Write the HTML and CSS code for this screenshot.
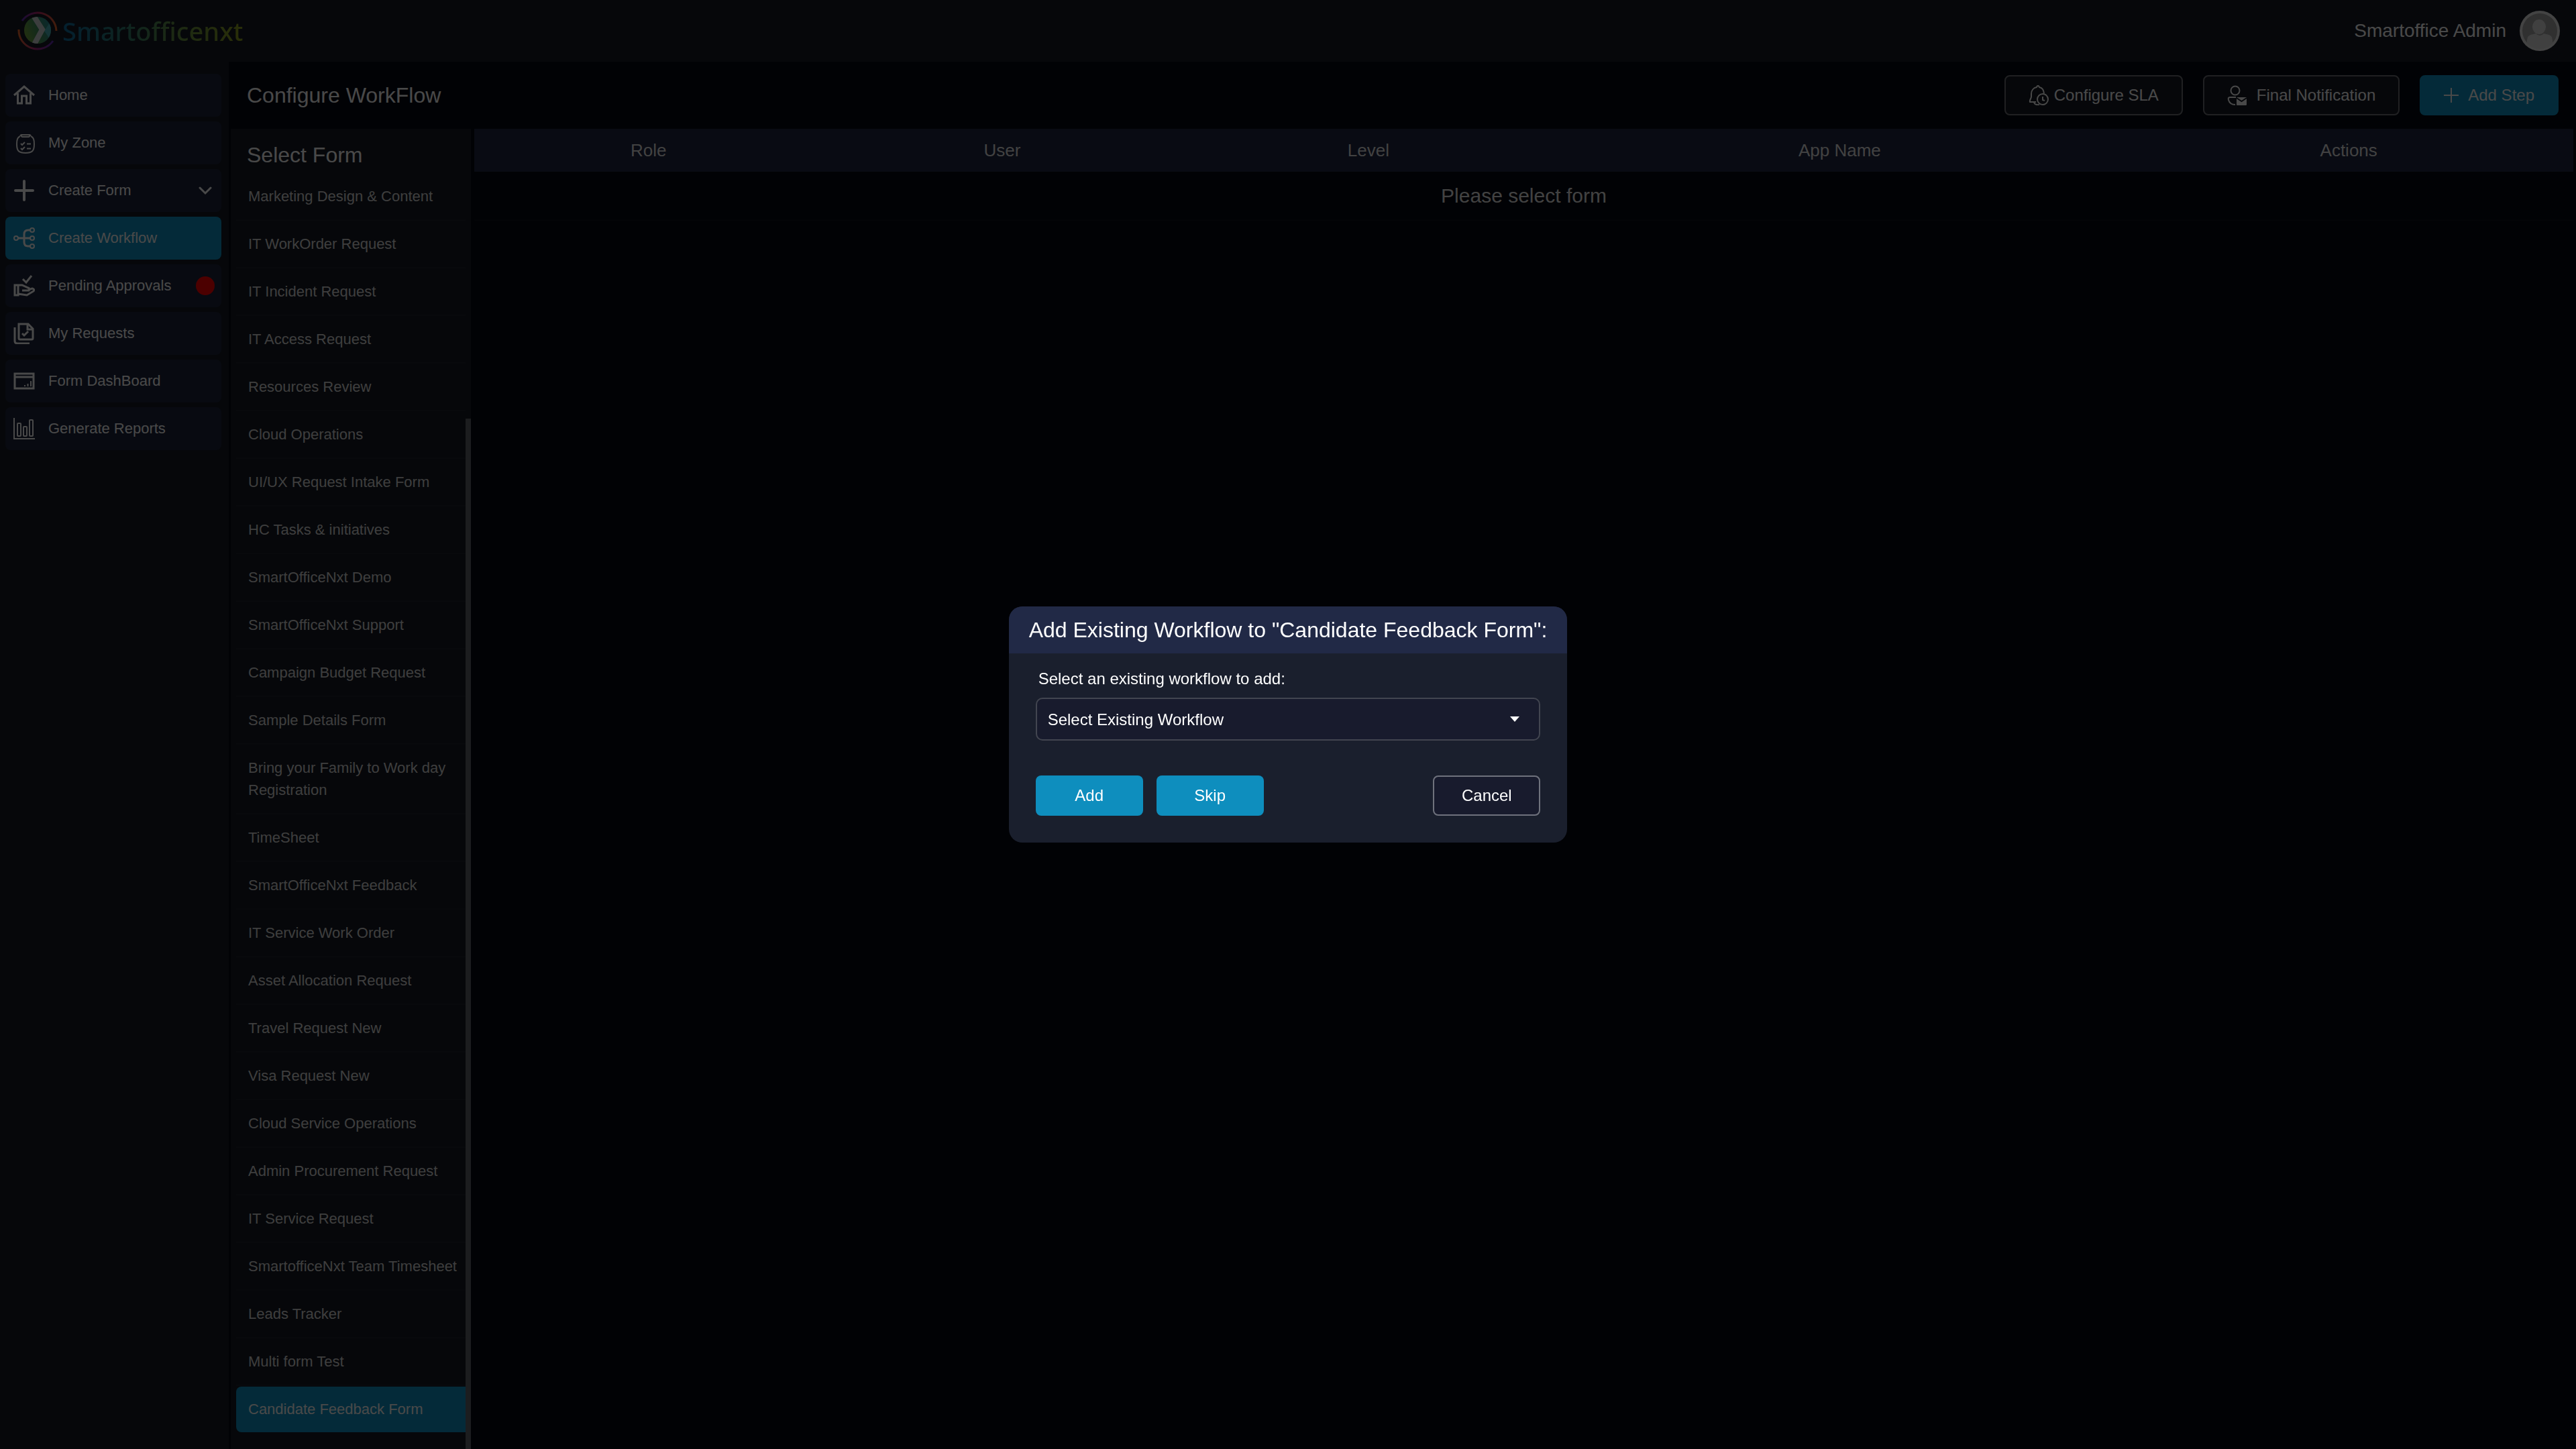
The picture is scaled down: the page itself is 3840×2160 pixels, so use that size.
FILE: index.html
```html
<!DOCTYPE html>
<html lang="en">
<head>
    <meta charset="UTF-8">
    <meta name="viewport" content="width=device-width, initial-scale=1.0">
    <title>Smartofficenxt - Configure WorkFlow</title>
    <link rel="stylesheet" href="styles.css">
</head>
<body>

    <header class="topbar">
        <a class="logo" href="#">
            <svg class="logo-mark" viewBox="0 0 60 60" fill="none">
                <defs>
                    <linearGradient id="ring-top" x1="0" y1="0" x2="1" y2="0">
                        <stop offset="0" stop-color="#5a2bb0"/>
                        <stop offset="0.45" stop-color="#b02468"/>
                        <stop offset="1" stop-color="#e0622a"/>
                    </linearGradient>
                    <linearGradient id="ring-bottom" x1="0" y1="0" x2="1" y2="0">
                        <stop offset="0" stop-color="#e0622a"/>
                        <stop offset="0.5" stop-color="#a3247c"/>
                        <stop offset="1" stop-color="#5a2bb0"/>
                    </linearGradient>
                    <linearGradient id="disc" x1="0" y1="0.6" x2="1" y2="0.2">
                        <stop offset="0" stop-color="#6fa03a"/>
                        <stop offset="0.5" stop-color="#3d8a5c"/>
                        <stop offset="1" stop-color="#26899a"/>
                    </linearGradient>
                    <clipPath id="disc-clip"><circle cx="30" cy="29" r="20"/></clipPath>
                </defs>
                <path d="M7 15A28 28 0 0 1 58 30" stroke="url(#ring-top)" stroke-width="3"/>
                <path d="M2 28A28 28 0 0 0 53 45" stroke="url(#ring-bottom)" stroke-width="3"/>
                <circle cx="30" cy="29" r="20" fill="url(#disc)"/>
                <g clip-path="url(#disc-clip)">
                    <path d="M40 30L52 12V48Z" fill="#46aeb5"/>
                    <path d="M23 6L37 28L24 52" stroke="#c8d0d0" stroke-width="8"/>
                </g>
            </svg>
            <span class="logo-text">Smartofficenxt</span>
        </a>
        <div class="user">
            <span class="user-name">Smartoffice Admin</span>
            <svg class="avatar" viewBox="0 0 60 60">
                <defs><clipPath id="avatar-clip"><circle cx="30" cy="30" r="27"/></clipPath></defs>
                <circle cx="30" cy="30" r="30" fill="#e0e0e0"/>
                <circle cx="30" cy="30" r="26" fill="#a0a0a0"/>
                <g clip-path="url(#avatar-clip)" fill="#d8d8d8">
                    <ellipse cx="29" cy="24" rx="10" ry="11"/>
                    <path d="M11 60V44q0-8 9-9l4-1q6 6 12 0l4 1q9 1 9 9v16z"/>
                </g>
            </svg>
        </div>
    </header>

    <div class="layout">
        <!-- Main menu -->
        <nav class="sidebar">
            <a class="menu-item" href="#">
                <svg class="icon" viewBox="0 0 32 32" fill="none" stroke="currentColor" stroke-width="3"><path d="M1 16L16 3l15 13M6.500 13v15h6V17h7v11h6V13"/></svg>
                Home
            </a>
            <a class="menu-item" href="#">
                <svg class="icon" viewBox="0 0 32 32" fill="none" stroke="currentColor" stroke-width="2"><path d="M10 6C6 8 5 11 5 18c0 10 3 13 13 13s13-3 13-13c0-7-1-10-5-12"/><path d="M10 4l3 3h10l3-3M11 4h14"/><path d="M11 17l2 2 4-4M11 24l2 2 4-4M20 17.500h6M20 24.500h6"/></svg>
                My Zone
            </a>
            <button class="menu-item" type="button">
                <svg class="icon" viewBox="0 0 32 32" fill="none" stroke="currentColor" stroke-width="4" stroke-linecap="round"><path d="M16 2v28M3 16h26"/></svg>
                Create Form
                <svg class="chevron" viewBox="0 0 20 20" fill="none" stroke="currentColor" stroke-width="3" stroke-linecap="round"><path d="M2 6l8 8 8-8"/></svg>
            </button>
            <a class="menu-item active" href="#">
                <svg class="icon" viewBox="0 0 32 32" fill="none" stroke="currentColor" stroke-width="2"><circle cx="4" cy="16" r="3"/><circle cx="28" cy="4" r="3"/><circle cx="28" cy="16" r="3"/><circle cx="28" cy="28" r="3"/><path d="M7 16h18M25 4h-3q-6 0-6 6v12q0 6 6 6h3" stroke-width="3"/></svg>
                Create Workflow
            </a>
            <a class="menu-item" href="#">
                <svg class="icon" viewBox="0 0 32 32" fill="none" stroke="currentColor" stroke-width="3"><path d="M14 6l5 5 8-10"/><path d="M2 15h5v15H2zM7 15h6l9 4q3 1 1 4H13M22 22l6-2q4 1 2 4l-10 6-13-2"/></svg>
                Pending Approvals
                <span class="badge"></span>
            </a>
            <a class="menu-item" href="#">
                <svg class="icon" viewBox="0 0 32 32" fill="none" stroke="currentColor" stroke-width="3"><path d="M8 2h14l7 7v14q0 2-2 2H10q-2 0-2-2z"/><path d="M21 2v8h8M2 7v20q0 4 4 4h18M13 16l3 3 6-6"/></svg>
                My Requests
            </a>
            <a class="menu-item" href="#">
                <svg class="icon" viewBox="0 0 32 32" fill="none" stroke="currentColor" stroke-width="3"><path d="M2 5h28v22H2zM2 10h28"/><path d="M17 24v-2M21.500 24v-4M26 24v-8" stroke-width="2"/></svg>
                Form DashBoard
            </a>
            <a class="menu-item" href="#">
                <svg class="icon" viewBox="0 0 32 32" fill="none" stroke="currentColor" stroke-width="2"><path d="M1 0v31h31"/><rect x="6" y="8" width="5" height="19" rx="1"/><rect x="15" y="13" width="5" height="14" rx="1"/><rect x="24" y="3" width="5" height="24" rx="1"/></svg>
                Generate Reports
            </a>
        </nav>

        <main class="content">
            <div class="page-head">
                <h1>Configure WorkFlow</h1>
                <div class="actions">
                    <button class="btn outline" type="button">
                        <svg class="btn-icon" viewBox="0 0 30 30" fill="none" stroke="currentColor" stroke-width="2"><path d="M11 25H2c-1-3 2-5 2-8v-4c0-5 3-9 8-10 1-3 3-3 4 0 5 1 6 4 7 9M8 26q2 4 8 3"/><circle cx="21" cy="21" r="8"/><path d="M21 17v5l3 1"/></svg>
                        Configure SLA
                    </button>
                    <button class="btn outline wide" type="button">
                        <svg class="btn-icon" viewBox="0 0 30 30" fill="none" stroke="currentColor" stroke-width="2"><circle cx="12" cy="8" r="6.500"/><path d="M13 18H4q-3 0-2 4 2 7 10 7"/><rect x="14" y="18" width="15" height="12" rx="1" fill="currentColor" stroke="none"/><path d="M14 19l7.500 5 7.500-5" stroke="#161a24"/></svg>
                        Final Notification
                    </button>
                    <button class="btn primary wide" type="button">
                        <svg class="plus-icon" viewBox="0 0 22 22" fill="none" stroke="currentColor" stroke-width="2"><path d="M11 0v22M0 11h22"/></svg>
                        Add Step
                    </button>
                </div>
            </div>

            <div class="workspace">
                <section class="forms">
                    <h2>Select Form</h2>
                    <div class="form-scroll">
                        <ul class="form-list">
                            <li><a href="#">Marketing Design &amp; Content</a></li>
                            <li><a href="#">IT WorkOrder Request</a></li>
                            <li><a href="#">IT Incident Request</a></li>
                            <li><a href="#">IT Access Request</a></li>
                            <li><a href="#">Resources Review</a></li>
                            <li><a href="#">Cloud Operations</a></li>
                            <li><a href="#">UI/UX Request Intake Form</a></li>
                            <li><a href="#">HC Tasks &amp; initiatives</a></li>
                            <li><a href="#">SmartOfficeNxt Demo</a></li>
                            <li><a href="#">SmartOfficeNxt Support</a></li>
                            <li><a href="#">Campaign Budget Request</a></li>
                            <li><a href="#">Sample Details Form</a></li>
                            <li><a href="#">Bring your Family to Work day Registration</a></li>
                            <li><a href="#">TimeSheet</a></li>
                            <li><a href="#">SmartOfficeNxt Feedback</a></li>
                            <li><a href="#">IT Service Work Order</a></li>
                            <li><a href="#">Asset Allocation Request</a></li>
                            <li><a href="#">Travel Request New</a></li>
                            <li><a href="#">Visa Request New</a></li>
                            <li><a href="#">Cloud Service Operations</a></li>
                            <li><a href="#">Admin Procurement Request</a></li>
                            <li><a href="#">IT Service Request</a></li>
                            <li><a href="#">SmartofficeNxt Team Timesheet</a></li>
                            <li><a href="#">Leads Tracker</a></li>
                            <li><a href="#">Multi form Test</a></li>
                            <li class="selected"><a href="#">Candidate Feedback Form</a></li>
                        </ul>
                        <div class="scroll-track"><div class="scroll-thumb"></div></div>
                    </div>
                </section>

                <section class="steps">
                    <table class="steps-table">
                        <thead>
                            <tr>
                                <th class="col-role">Role</th>
                                <th class="col-user">User</th>
                                <th class="col-level">Level</th>
                                <th class="col-app">App Name</th>
                                <th class="col-actions">Actions</th>
                            </tr>
                        </thead>
                        <tbody>
                            <tr>
                                <td colspan="5">Please select form</td>
                            </tr>
                        </tbody>
                    </table>
                </section>
            </div>
        </main>
    </div>

    <!-- Add existing workflow dialog -->
    <div class="backdrop">
        <div class="dialog" role="dialog" aria-modal="true" aria-labelledby="dialog-title">
            <h2 class="dialog-title" id="dialog-title">Add Existing Workflow to "Candidate Feedback Form":</h2>
            <form class="dialog-body">
                <label for="workflow">Select an existing workflow to add:</label>
                <div class="select-wrap">
                    <select id="workflow">
                        <option>Select Existing Workflow</option>
                    </select>
                    <svg class="caret" viewBox="0 0 14 8" fill="currentColor"><path d="M0 0h14L7 8z"/></svg>
                </div>
                <div class="dialog-buttons">
                    <button class="btn primary" type="button">Add</button>
                    <button class="btn primary" type="button">Skip</button>
                    <button class="btn cancel" type="button">Cancel</button>
                </div>
            </form>
        </div>
    </div>

</body>
</html>
```
FILE: styles.css
```css
* {
    box-sizing: border-box;
}

html, body {
    height: 100%;
}

body {
    margin: 0;
    display: flex;
    flex-direction: column;
    overflow: hidden;
    background-color: #040711;
    color: #f4f4f4;
    font-family: "Liberation Sans", Arial, sans-serif;
    font-size: 22px;
}

h1, h2 {
    margin: 0;
    font-size: 32px;
    font-weight: normal;
    line-height: 38px;
}

a {
    color: inherit;
    text-decoration: none;
}

button, select {
    font-family: inherit;
    color: inherit;
    cursor: pointer;
}

/* Top bar */
.topbar {
    display: flex;
    justify-content: space-between;
    align-items: center;
    flex: none;
    height: 92px;
    padding: 0 24px 0 26px;
    background-color: #151a23;
}

.logo {
    display: flex;
    align-items: center;
    gap: 7px;
}

.logo-mark, .avatar {
    width: 60px;
    height: 60px;
}

.logo-text {
    font-family: "Noto Sans", sans-serif;
    font-size: 38px;
    font-weight: 500;
    line-height: 52px;
    font-variant-ligatures: none;
    background: linear-gradient(90deg, #0e6a9e, #2f7a6c 35%, #5d8a45 60%, #8a9a1e);
    -webkit-background-clip: text;
    background-clip: text;
    color: transparent;
}

.user {
    display: flex;
    align-items: center;
    gap: 20px;
    font-size: 28px;
}

/* Layout */
.layout {
    display: flex;
    flex: 1;
    min-height: 0;
}

.sidebar {
    display: flex;
    flex-direction: column;
    gap: 7px;
    flex: none;
    width: 341px;
    padding: 18px 11px 0 8px;
    background-color: #151a23;
}

.menu-item {
    display: flex;
    align-items: center;
    gap: 20px;
    height: 64px;
    padding: 0 14px 0 12px;
    border: none;
    border-radius: 8px;
    background-color: #1d243a;
    font-size: 22px;
    text-align: left;
}

.menu-item.active {
    background-color: #0e8ebe;
}

.icon {
    flex: none;
    width: 32px;
    height: 32px;
}

.chevron {
    width: 20px;
    height: 20px;
    margin-left: auto;
}

.badge {
    width: 28px;
    height: 28px;
    margin-left: auto;
    margin-right: -4px;
    border-radius: 50%;
    background-color: #f00;
}

.content {
    display: flex;
    flex-direction: column;
    flex: 1;
    min-width: 0;
    padding-left: 3px;
}

.page-head {
    display: flex;
    justify-content: space-between;
    align-items: center;
    flex: none;
    height: 100px;
    padding: 0 26px 0 24px;
}

.actions {
    display: flex;
    gap: 30px;
}

.btn {
    display: flex;
    justify-content: center;
    align-items: center;
    gap: 8px;
    height: 60px;
    padding: 0 34px;
    border: 2px solid transparent;
    border-radius: 8px;
    background-color: #161a24;
    font-size: 24px;
}

.btn.wide {
    gap: 14px;
}

.btn.outline {
    border-color: #6b6d73;
}

.btn.primary {
    border: none;
    padding: 0 36px;
    background-color: #0e8ebe;
}

.btn-icon {
    width: 30px;
    height: 30px;
}

.plus-icon {
    width: 22px;
    height: 22px;
}

.workspace {
    display: flex;
    flex: 1;
    min-height: 0;
    padding-right: 4px;
}

/* Form list */
.forms {
    display: flex;
    flex-direction: column;
    flex: none;
    width: 358px;
    margin-right: 5px;
    background-color: #151a23;
}

.forms h2 {
    padding: 20px 24px 9px;
}

.form-scroll {
    display: flex;
    flex: 1;
    min-height: 0;
}

.form-list {
    flex: 1;
    margin: 0;
    padding: 0 0 0 8px;
    list-style: none;
    color: #d0d0d0;
}

.form-list li {
    margin-bottom: 1px;
    border-bottom: 2px solid #1c212b;
}

.form-list a {
    display: block;
    padding: 17px 0 18px 18px;
    line-height: 33px;
}

.form-list .selected {
    border: none;
    border-radius: 8px 0 0 8px;
    background-color: #0e8ebe;
    color: #f4f4f4;
}

.scroll-track {
    display: flex;
    flex-direction: column;
    justify-content: flex-end;
    width: 8px;
}

.scroll-thumb {
    height: 80.8%;
    background-color: #606369;
}

/* Workflow steps */
.steps {
    flex: 1;
    min-width: 0;
}

.steps-table {
    width: 100%;
    table-layout: fixed;
    border-collapse: collapse;
    text-align: center;
}

.steps-table th {
    height: 64px;
    padding: 0;
    background-color: #1e2640;
    color: #ddd;
    font-size: 26px;
    font-weight: normal;
}

.steps-table td {
    height: 72px;
    padding: 0;
    border-bottom: 2px solid #0c0f18;
    color: #ddd;
    font-size: 30px;
}

.col-role {
    width: 16.6%;
}

.col-user {
    width: 17.1%;
}

.col-level {
    width: 17.8%;
}

.col-app {
    width: 27.1%;
}

.col-actions {
    width: 21.4%;
}

/* Dialog */
.backdrop {
    position: fixed;
    inset: 0;
    display: flex;
    justify-content: center;
    align-items: center;
    background-color: rgba(0, 0, 0, 0.7);
}

.dialog {
    border-radius: 20px;
    overflow: hidden;
    background-color: #1a1f2d;
    color: #fff;
}

.dialog-title {
    padding: 16px 30px;
    background-color: #212946;
}

.dialog-body {
    display: flex;
    flex-direction: column;
    padding: 22px 40px 40px;
    font-size: 24px;
}

.dialog-body label {
    padding: 0 4px;
    line-height: 32px;
}

.select-wrap {
    display: grid;
    align-items: center;
    margin: 12px 0 52px;
}

.select-wrap select {
    grid-area: 1 / 1;
    height: 64px;
    padding: 0 16px;
    appearance: none;
    border: 2px solid #424550;
    border-radius: 10px;
    background-color: #181b2d;
    font-size: 24px;
}

.caret {
    grid-area: 1 / 1;
    justify-self: end;
    width: 14px;
    height: 8px;
    margin-right: 31px;
    pointer-events: none;
}

.dialog-buttons {
    display: flex;
    gap: 20px;
}

.dialog-buttons .btn {
    width: 160px;
}

.btn.cancel {
    margin-left: auto;
    border-color: #6f727d;
    background-color: #181b2d;
}
```
